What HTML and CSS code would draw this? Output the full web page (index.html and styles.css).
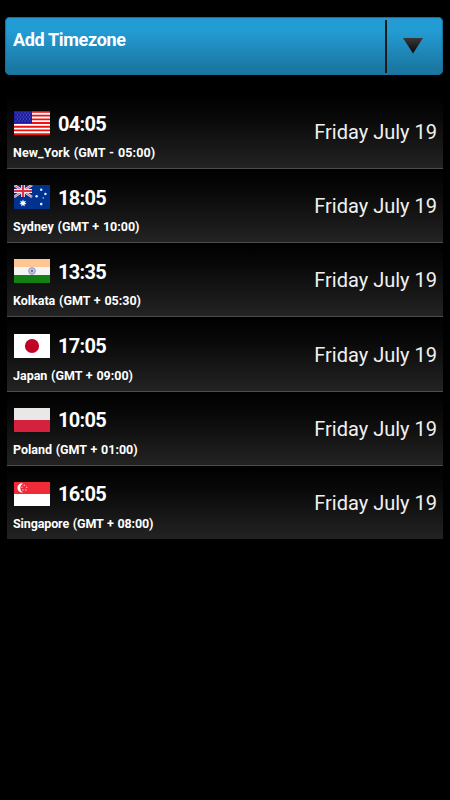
FILE: index.html
```
<!DOCTYPE html>
<html>
<head>
    <meta charset="utf-8">
    <title>Timezones</title>
    <link rel="stylesheet" href="styles.css">
</head>
<body>
  <div class="add-bar">
    <div class="add-label">Add Timezone</div>
    <div class="add-arrow">
      <svg width="22" height="16" viewBox="0 0 22 16">
        <defs>
          <linearGradient id="arrow" x1="0" y1="0" x2="0" y2="1">
            <stop offset="0" stop-color="#383838"/>
            <stop offset="1" stop-color="#080808"/>
          </linearGradient>
        </defs>
        <path d="M1 0H21L11 15.5Z" fill="url(#arrow)"/>
      </svg>
    </div>
  </div>

  <div class="zones">
    <div class="zone">
      <div class="info">
        <div class="clock">
          <svg class="flag" viewBox="0 0 36 24" preserveAspectRatio="none">
            <rect width="36" height="24" fill="#fff"/>
            <path d="M0 .92H36M0 4.6H36M0 8.3H36M0 12H36M0 15.7H36M0 19.4H36M0 23.1H36" stroke="#f01010" stroke-width="1.85"/>
            <rect width="18" height="12.5" fill="#1c1ca0"/>
            <path d="M1.5 2H17M1.5 6H17M1.5 10H17" stroke="#7c7cd0" stroke-width=".9" stroke-dasharray="1 2"/>
            <path d="M3 4H16M3 8H16" stroke="#7c7cd0" stroke-width=".9" stroke-dasharray="1 2"/>
          </svg>
          <span class="time">04:05</span>
        </div>
        <div class="place wide">New_York (GMT - 05:00)</div>
      </div>
      <div class="date">Friday July 19</div>
    </div>

    <div class="zone">
      <div class="info">
        <div class="clock">
          <svg class="flag" viewBox="0 0 36 24" preserveAspectRatio="none">
            <rect width="36" height="24" fill="#003390"/>
            <path d="M0 0L18 12M18 0L0 12" stroke="#e4dbe8" stroke-width="2.6"/>
            <path d="M0 0L18 12M18 0L0 12" stroke="#e0566c" stroke-width="1"/>
            <path d="M9 0V12M0 6H18" stroke="#f2e6ec" stroke-width="3.8"/>
            <path d="M9 0V12M0 6H18" stroke="#df304b" stroke-width="2.1"/>
            <path d="M9 14.4L9.8 16.4L11.9 15.8L10.9 17.7L12.7 18.9L10.5 19.3L10.6 21.5L9 20L7.4 21.5L7.5 19.3L5.3 18.9L7.1 17.7L6.1 15.8L8.2 16.4Z" fill="#fff"/>
            <g fill="#e8efff">
              <circle cx="27.2" cy="4.7" r="1.2"/>
              <circle cx="22.6" cy="11.2" r="1.2"/>
              <circle cx="31.4" cy="8.9" r="1.2"/>
              <circle cx="27.2" cy="19.1" r="1.3"/>
              <circle cx="29.2" cy="12.9" r=".7"/>
            </g>
          </svg>
          <span class="time">18:05</span>
        </div>
        <div class="place">Sydney (GMT + 10:00)</div>
      </div>
      <div class="date">Friday July 19</div>
    </div>

    <div class="zone">
      <div class="info">
        <div class="clock">
          <svg class="flag" viewBox="0 0 36 24" preserveAspectRatio="none">
            <rect width="36" height="8" fill="#ffc592"/>
            <rect y="8" width="36" height="8" fill="#f4f4f4"/>
            <rect y="16" width="36" height="8" fill="#128012"/>
            <circle cx="18" cy="12" r="3.3" fill="#c9cbe2" stroke="#8088bb" stroke-width=".9"/>
            <circle cx="18" cy="12" r="1.2" fill="#6670ae"/>
          </svg>
          <span class="time">13:35</span>
        </div>
        <div class="place">Kolkata (GMT + 05:30)</div>
      </div>
      <div class="date">Friday July 19</div>
    </div>

    <div class="zone">
      <div class="info">
        <div class="clock">
          <svg class="flag" viewBox="0 0 36 24" preserveAspectRatio="none">
            <rect width="36" height="24" fill="#fff"/>
            <circle cx="18" cy="12" r="7.1" fill="#c00425"/>
          </svg>
          <span class="time">17:05</span>
        </div>
        <div class="place">Japan (GMT + 09:00)</div>
      </div>
      <div class="date">Friday July 19</div>
    </div>

    <div class="zone">
      <div class="info">
        <div class="clock">
          <svg class="flag" viewBox="0 0 36 24" preserveAspectRatio="none">
            <rect width="36" height="24" fill="#e9e8e7"/>
            <rect y="12" width="36" height="12" fill="#d4213d"/>
          </svg>
          <span class="time">10:05</span>
        </div>
        <div class="place">Poland (GMT + 01:00)</div>
      </div>
      <div class="date">Friday July 19</div>
    </div>

    <div class="zone">
      <div class="info">
        <div class="clock">
          <svg class="flag" viewBox="0 0 36 24" preserveAspectRatio="none">
            <rect width="36" height="24" fill="#fff"/>
            <rect width="36" height="12" fill="#ef2b3a"/>
            <path d="M9 1.4A4.6 4.6 0 1 0 9 10.4A5 5 0 0 1 9 1.4Z" fill="#fff"/>
            <g fill="#ffc6cb">
              <circle cx="10.2" cy="3.3" r=".75"/>
              <circle cx="8" cy="5.3" r=".75"/>
              <circle cx="12.7" cy="5.3" r=".75"/>
              <circle cx="8.9" cy="8" r=".75"/>
              <circle cx="11.8" cy="8" r=".75"/>
            </g>
          </svg>
          <span class="time">16:05</span>
        </div>
        <div class="place narrow">Singapore (GMT + 08:00)</div>
      </div>
      <div class="date">Friday July 19</div>
    </div>
  </div>
</body>
</html>
```

FILE: styles.css
```
body {
    margin: 0;
    padding: 17px 7px 0 5px;
    background-color: #000;
    color: #fff;
    font-family: Roboto, sans-serif;
}

/* blue bar on top */
.add-bar {
    display: flex;
    box-sizing: border-box;
    height: 58px;
    border-radius: 5px;
    background: linear-gradient(to bottom, #239bd3 0%, #239bd3 25%, #1a78a3 88%, #1a78a3 100%);
    box-shadow: inset 0 0 1px 1px #1b7199;
}
.add-label {
    flex: 1;
    padding: 12px 0 0 8px;
    font-size: 18px;
    line-height: 22px;
    font-weight: bold;
    letter-spacing: -0.33px;
    white-space: nowrap;
}
.add-arrow {
    display: flex;
    justify-content: center;
    box-sizing: border-box;
    width: 58px;
    height: 53px;
    margin-top: 3px;
    padding: 18px 4px 0 0;
    border-left: 2px solid #1d1b17;
}

/* list of clocks */
.zones {
    margin: 20px 0 0 2px;
}
.zone {
    display: flex;
    justify-content: space-between;
    box-sizing: border-box;
    height: 74.15px;
    padding: 15.2px 6px 0 6px;
    background: linear-gradient(to bottom, #000 0%, #080808 30%, #232323 100%);
    border-bottom: 1px solid #4c4c4c;
}
.zone:last-child {
    height: 73px;
    border-bottom: none;
}
.clock {
    display: flex;
    align-items: center;
    gap: 8px;
    height: 26px;
    padding-left: 1px;
}
.flag {
    width: 36px;
    height: 24px;
}
.time {
    padding-top: 1px;
    font-size: 20px;
    line-height: 26px;
    font-weight: bold;
    letter-spacing: -0.7px;
}
.place {
    margin-top: 9px;
    font-size: 12.5px;
    line-height: 16px;
    font-weight: bold;
    letter-spacing: -0.02px;
    word-spacing: 0.7px;
    white-space: nowrap;
}
.wide {
    letter-spacing: 0.1px;
}
.narrow {
    letter-spacing: -0.12px;
}
.date {
    padding-top: 10px;
    font-size: 20px;
    line-height: 24px;
    color: #f0f0f0;
    white-space: nowrap;
}
```
